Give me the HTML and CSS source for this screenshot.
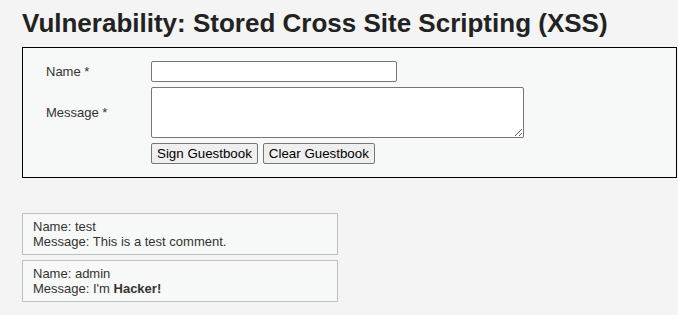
FILE: index.html
```html
<!DOCTYPE html>
<html>
<head>
    <title>Vulnerability: Stored Cross Site Scripting (XSS)</title>
    <meta charset="utf-8">
    <link rel="stylesheet" href="styles.css">
</head>
<body>
    <div class="body_padded">
        <h1>Vulnerability: Stored Cross Site Scripting (XSS)</h1>

        <div class="vulnerable_code_area">
            <form name="guestform" method="post">
                <div class="form-grid">
                    <label class="form-label" for="txtName">Name *</label>
                    <input class="txt-name" id="txtName" name="txtName" type="text" maxlength="10">

                    <label class="form-label label-msg" for="mtxMessage">Message *</label>
                    <textarea class="txt-message" id="mtxMessage" name="mtxMessage" maxlength="50"></textarea>

                    <span></span>
                    <div class="buttons">
                        <input class="btn" name="btnSign" type="button" value="Sign Guestbook">
                        <input class="btn" name="btnClear" type="button" value="Clear Guestbook">
                    </div>
                </div>
            </form>
        </div>

        <div class="guestbook">
            <div class="guestbook_comments">Name: test<br>Message: This is a test comment.<br></div>
            <div class="guestbook_comments">Name: admin<br>Message: I'm <b>Hacker!</b><br></div>
        </div>
    </div>
</body>
</html>
```

FILE: styles.css
```css
body {
    margin: 0;
    background-color: #f4f4f4;
    font-family: "Liberation Sans", Arial, sans-serif;
    font-size: 13px;
    color: #333;
}
.body_padded {
    padding: 6px 1px 0 22px;
}
h1 {
    margin: 0 0 7px 0;
    font-size: 26px;
    font-weight: bold;
    color: #222;
    line-height: 34px;
}
.vulnerable_code_area {
    background-color: #f7f8f8;
    border: 1px solid #000;
    padding: 13px 10px 13px 23px;
}
.form-grid {
    display: grid;
    grid-template-columns: 105px auto;
    row-gap: 5px;
    align-items: start;
}
.form-label {
    font-size: 13px;
    line-height: 21px;
}
.label-msg {
    margin-top: 15px;
}
.txt-name {
    width: 246px;
    height: 21px;
    box-sizing: border-box;
    margin: 0;
    border: 1px solid #767676;
    border-radius: 2px;
    background: #fff;
}
.txt-message {
    width: 373px;
    height: 51px;
    box-sizing: border-box;
    margin: 0;
    border: 1px solid #767676;
    border-radius: 2px;
    background: #fff;
    resize: both;
}
.buttons {
    display: flex;
    gap: 5px;
}
.btn {
    margin: 0;
    height: 21px;
    padding: 0 5px;
    font-family: "Liberation Sans", Arial, sans-serif;
    font-size: 13.33px;
    color: #000;
    background-color: #efefef;
    border: 1px solid #767676;
    border-radius: 2px;
}
.guestbook {
    margin-top: 35px;
}
.guestbook_comments {
    width: 294px;
    border: 1px solid #c0c0c0;
    padding: 5px 10px;
    margin-bottom: 5px;
    background-color: #f7f8f8;
    line-height: 15px;
    font-size: 13px;
}
```
